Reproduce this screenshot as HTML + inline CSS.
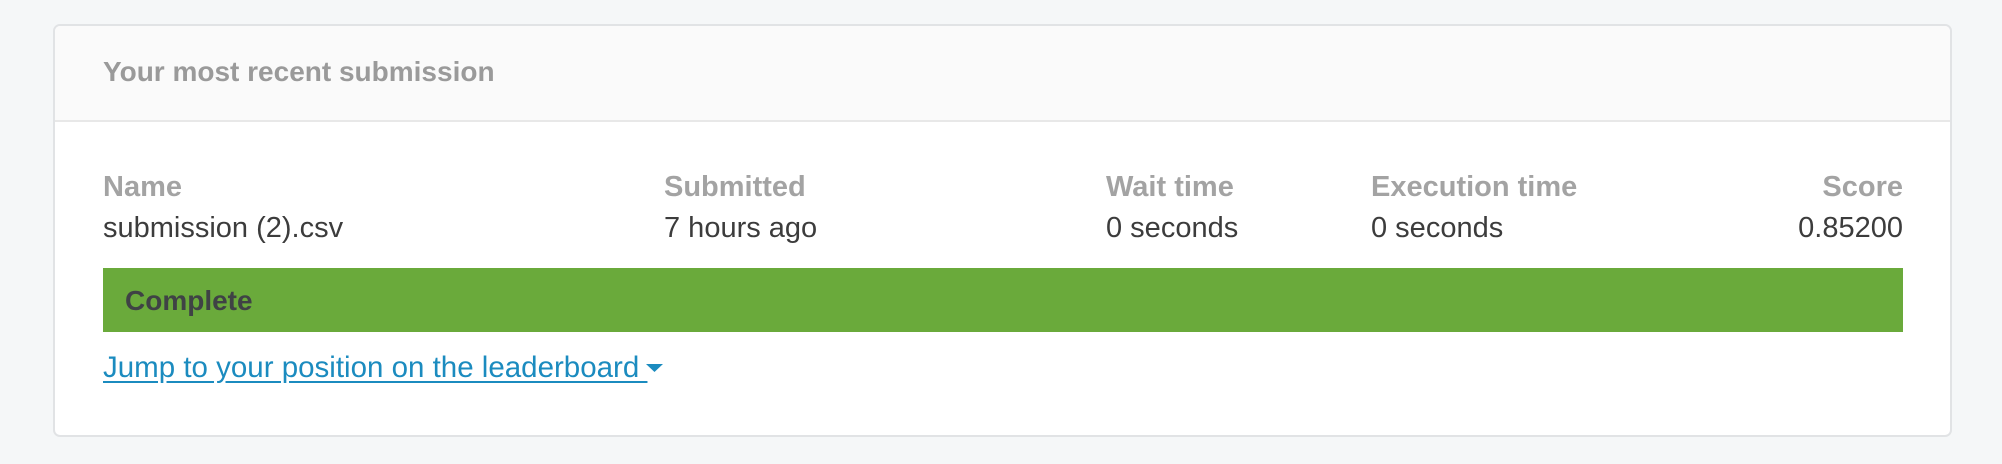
<!DOCTYPE html>
<html><head><style>
html,body{margin:0;padding:0}
body{width:2002px;height:464px;background:#f5f7f8;position:relative;font-family:"Liberation Sans",sans-serif;overflow:hidden}
.card{position:absolute;left:53px;top:24px;width:1899px;height:413px;background:#fff;border:2px solid #e1e3e5;border-radius:7px;box-sizing:border-box;overflow:hidden}
.hdr{position:absolute;left:0;top:0;right:0;height:94px;background:#fafafa;border-bottom:2px solid #e8e8e8}
.t{position:absolute;white-space:nowrap;font-size:29px;line-height:1}
.lab{color:#a3a3a3;font-weight:bold}
.val{color:#3c3c3c}
.bar{position:absolute;left:48px;top:242px;width:1800px;height:64px;background:#6aaa3b}
a{color:#1b8bbf;text-decoration:underline;text-underline-offset:4px}
</style></head><body>
<div class="card">
<div class="hdr"></div>
<div class="t lab" style="left:48px;top:32px;color:#9a9a9a;font-size:28px">Your most recent submission</div>
<div class="t lab" style="left:48px;top:147px">Name</div>
<div class="t val" style="left:48px;top:188px">submission (2).csv</div>
<div class="t lab" style="left:609px;top:147px">Submitted</div>
<div class="t val" style="left:609px;top:188px">7 hours ago</div>
<div class="t lab" style="left:1051px;top:147px">Wait time</div>
<div class="t val" style="left:1051px;top:188px">0 seconds</div>
<div class="t lab" style="left:1316px;top:147px">Execution time</div>
<div class="t val" style="left:1316px;top:188px">0 seconds</div>
<div class="t lab" style="right:47px;top:147px">Score</div>
<div class="t val" style="right:47px;top:188px">0.85200</div>
<div class="bar"></div>
<div class="t" style="left:70px;top:261px;font-weight:bold;color:#3f4245;font-size:28px">Complete</div>
<div class="t" style="left:48px;top:327px;font-size:29.5px"><a>Jump to your position on the leaderboard </a><svg width="17" height="9" style="vertical-align:4px;margin-left:-1px"><path d="M0 0H17L8.5 8Z" fill="#1b8bbf"/></svg></div>
</div>
</body></html>
